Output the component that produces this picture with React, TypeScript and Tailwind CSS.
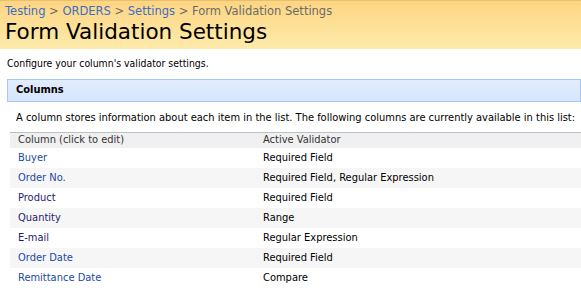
import React from "react";

const rows: { name: string; v: string; dark?: boolean }[] = [
  { name: "Buyer", v: "Required Field" },
  { name: "Order No.", v: "Required Field, Regular Expression" },
  { name: "Product", v: "Required Field", dark: true },
  { name: "Quantity", v: "Range", dark: true },
  { name: "E-mail", v: "Regular Expression", dark: true },
  { name: "Order Date", v: "Required Field" },
  { name: "Remittance Date", v: "Compare" },
];

export default function App() {
  return (
    <div className="w-[581px] h-[288px] overflow-hidden bg-white text-[11px] text-black" style={{ fontFamily: '"DejaVu Sans Condensed", "Liberation Sans", sans-serif' }}>
      <div className="h-[49px] border-t border-[#e8c070] bg-gradient-to-b from-[#fdd582] to-[#feebab] pl-[5px] pt-[2px]" style={{ fontFamily: '"DejaVu Sans", sans-serif' }}>
        <div className="text-[11.5px] leading-[16px] text-[#6b6b6b]">
          <a className="text-[#3d6ec6]">Testing</a> &gt; <a className="text-[#3d6ec6]">ORDERS</a> &gt; <a className="text-[#3d6ec6]">Settings</a> &gt; Form Validation Settings
        </div>
        <div className="text-[21.5px] leading-[26px] text-black">Form Validation Settings</div>
      </div>
      <div className="pl-[7px] pt-[7px] leading-[14px] text-[10.4px]">Configure your column's validator settings.</div>
      <div className="ml-[7px] mt-[9px] h-[23px] border border-[#a6c8f7] bg-gradient-to-b from-[#e2edfd] to-[#d6e6fd] pl-[8px] flex items-center font-bold">Columns</div>
      <div className="pl-[16px] pt-[9px] leading-[14px]">A column stores information about each item in the list. The following columns are currently available in this list:</div>
      <div className="ml-[10px] mt-[7px]">
        <div className="flex h-[16px] items-center border-t border-[#b8c0cc] bg-[#f0f0f0] text-[#333]">
          <div className="w-[253px] pl-[8px]">Column (click to edit)</div>
          <div>Active Validator</div>
        </div>
        {rows.map((r, i) => (
          <div key={r.name} className={`flex h-[20px] items-center ${i % 2 === 1 ? "bg-[#f6f6f6]" : "bg-white"}`}>
            <div className={`w-[253px] pl-[8px] ${r.dark ? "text-[#1c2270]" : "text-[#2148a4]"}`}>{r.name}</div>
            <div>{r.v}</div>
          </div>
        ))}
      </div>
    </div>
  );
}
